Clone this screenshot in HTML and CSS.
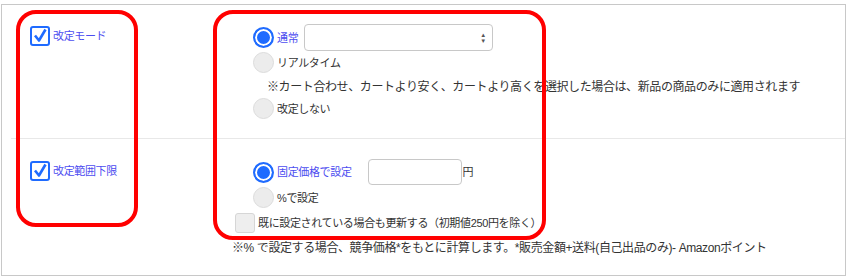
FILE: index.html
```html
<!DOCTYPE html>
<html lang="ja">
<head>
    <meta charset="UTF-8">
    <title>改定設定</title>
    <link rel="stylesheet" href="styles.css">
</head>
<body>
    <div class="panel">
        <div class="row row-mode">
            <div class="label-col">
                <span class="check on"><svg viewBox="0 0 16 16" width="16" height="16"><path d="M3 7.5 L7 12.5 L13.5 1.5" fill="none" stroke="#1f6bff" stroke-width="2.6" stroke-linejoin="round"/></svg></span>
                <span class="label">改定モード</span>
            </div>
            <div class="opts">
                <div class="line line-first">
                    <span class="radio on"></span>
                    <span class="label">通常</span>
                    <div class="select"><span class="arrows">&#9650;<br>&#9660;</span></div>
                </div>
                <div class="line">
                    <span class="radio"></span>
                    <span class="text">リアルタイム</span>
                </div>
                <div class="line note note-mode">※カート合わせ、カートより安く、カートより高くを選択した場合は、新品の商品のみに適用されます</div>
                <div class="line">
                    <span class="radio"></span>
                    <span class="text">改定しない</span>
                </div>
            </div>
        </div>
        <div class="row row-lower">
            <div class="label-col">
                <span class="check on"><svg viewBox="0 0 16 16" width="16" height="16"><path d="M3 7.5 L7 12.5 L13.5 1.5" fill="none" stroke="#1f6bff" stroke-width="2.6" stroke-linejoin="round"/></svg></span>
                <span class="label">改定範囲下限</span>
            </div>
            <div class="opts">
                <div class="line line-price">
                    <span class="radio on"></span>
                    <span class="label">固定価格で設定</span>
                    <div class="input"></div>
                    <span class="text">円</span>
                </div>
                <div class="line">
                    <span class="radio"></span>
                    <span class="text">%で設定</span>
                </div>
                <div class="line line-box">
                    <span class="check"></span>
                    <span class="text">既に設定されている場合も更新する（初期値250円を除く）</span>
                </div>
                <div class="line note">※% で設定する場合、競争価格*をもとに計算します。*販売金額+送料(自己出品のみ)- Amazonポイント</div>
            </div>
        </div>
    </div>

    <div class="mark mark-left"></div>
    <div class="mark mark-right"></div>
</body>
</html>
```

FILE: styles.css
```css
body {
    margin: 0;
    font-family: "Liberation Sans", "Noto Sans CJK JP", sans-serif;
    font-size: 12px;
    color: #333;
    background-color: #fff;
}
.panel {
    margin: 4px 2px 0 1px;
    height: 270px;
    border: 1px solid #c8c8c8;
}
.row {
    display: flex;
}
.row-mode {
    height: 133px;
    margin-left: 9px;
    border-bottom: 1px solid #e8e8e8;
}
.row-lower {
    height: 137px;
    margin-left: 9px;
}
.label-col {
    width: 202px;
    padding-left: 19px;
    display: flex;
    align-items: center;
    align-self: flex-start;
}
.row-mode .label-col {
    padding-top: 21px;
}
.row-lower .label-col {
    padding-top: 22px;
}
.label,
.text {
    font-size: 11px;
    letter-spacing: -0.35px;
    line-height: 20px;
}
.label {
    color: #4d4df0;
    margin-left: 3px;
}
.check {
    width: 20px;
    height: 20px;
    box-sizing: border-box;
    border: 1px solid #d6d6d6;
    border-radius: 3px;
    background-color: #eee;
    display: flex;
    align-items: center;
    justify-content: center;
    flex-shrink: 0;
}
.check.on {
    border: 2px solid #1f6bff;
    background-color: #fff;
}
.opts {
    display: flex;
    flex-direction: column;
}
.row-mode .opts {
    padding-top: 19px;
}
.row-lower .opts {
    padding-top: 20px;
}
.line {
    display: flex;
    align-items: center;
    height: 23px;
    padding-left: 21px;
    white-space: nowrap;
}
.line > span + span {
    margin-left: 3px;
}
.line-first {
    height: 27px;
}
.line-box {
    padding-left: 3px;
}
.row-lower .line {
    height: 25px;
}
.row-lower .line-price {
    height: 26px;
}
.radio {
    width: 21px;
    height: 21px;
    box-sizing: border-box;
    border-radius: 50%;
    border: 1px solid #dcdcdc;
    background-color: #ececec;
    flex-shrink: 0;
}
.radio.on {
    border: 2px solid #1f6bff;
    background-color: #1f6bff;
    box-shadow: inset 0 0 0 2px #fff;
}
.select {
    width: 189px;
    height: 27px;
    box-sizing: border-box;
    margin-left: 6px;
    border: 1px solid #c8c8c8;
    border-radius: 4px;
    background-color: #fff;
    display: flex;
    align-items: center;
    justify-content: flex-end;
}
.arrows {
    font-size: 6px;
    line-height: 6px;
    color: #555;
    margin-right: 6px;
    text-align: center;
}
.input {
    width: 94px;
    height: 26px;
    box-sizing: border-box;
    margin-left: 16px;
    border: 1px solid #c8c8c8;
    border-radius: 4px;
    background-color: #fff;
}
.line-price .input + span {
    margin-left: 1px;
}
.note {
    letter-spacing: -0.4px;
}
.note-mode {
    padding-left: 35px;
}
.row-lower .note {
    padding-left: 0;
    height: 22px;
}
.mark {
    position: absolute;
    border: 4px solid #ff0000;
    border-radius: 20px;
    box-sizing: border-box;
}
.mark-left {
    left: 16px;
    top: 10px;
    width: 122px;
    height: 217px;
}
.mark-right {
    left: 213px;
    top: 10px;
    width: 333px;
    height: 230px;
}
```
